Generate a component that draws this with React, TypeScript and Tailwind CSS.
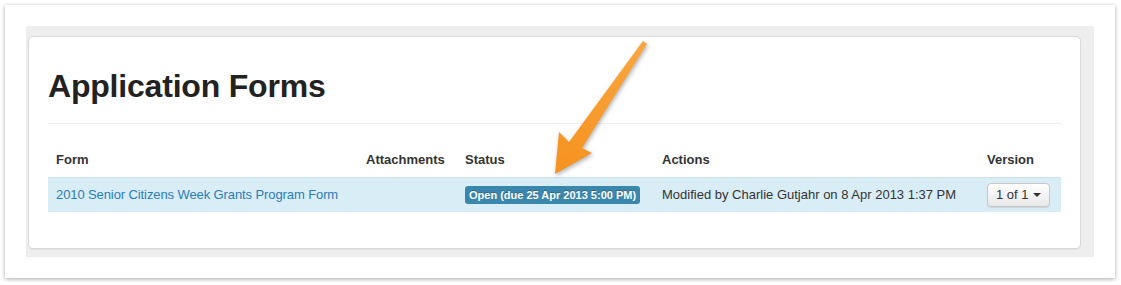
import React from 'react';

const font = { fontFamily: '"Liberation Sans", Arial, sans-serif' };

const columns = 'grid grid-cols-[310px_99px_197px_325px_82px]';

function Arrow() {
  return (
    <svg
      className="absolute left-0 top-0 pointer-events-none drop-shadow-[1px_2px_2px_rgba(0,0,0,0.3)]"
      width="1121"
      height="285"
      viewBox="0 0 1121 285"
    >
      <defs>
        <linearGradient id="arrowFill" x1="645" y1="42" x2="556" y2="174" gradientUnits="userSpaceOnUse">
          <stop offset="0" stopColor="#f8a640" />
          <stop offset="1" stopColor="#f6921e" />
        </linearGradient>
      </defs>
      <polygon
        points="643,41 647,44 582,148 592,153 555,174 559,132 569,142"
        fill="url(#arrowFill)"
      />
    </svg>
  );
}

export default function App() {
  return (
    <div className="relative w-[1121px] h-[285px] bg-white overflow-hidden" style={font}>
      <div className="ml-[5px] mt-[5px] w-[1110px] h-[273px] p-[21px] bg-white shadow-[0_1px_4px_rgba(0,0,0,0.35)]">
        <div className="h-full bg-[#eeeeee] pt-[10px] pl-[2px] pr-[13px] pb-[8px]">
          <div className="h-full bg-white border border-[#d9d9d9] rounded-[5px] px-[19px] pt-[29px] shadow-[0_1px_1px_rgba(0,0,0,0.05)]">
            <h1 className="text-[32px] leading-[40px] font-bold text-[#222222] tracking-[-0.2px]">
              Application Forms
            </h1>
            <div className="mt-[17px] h-px bg-[#eeeeee]" />

            <div className="mt-[18px] text-[13px] text-[#333333]">
              <div className={`${columns} h-[35px] items-center font-bold`}>
                <div className="px-2">Form</div>
                <div className="px-2">Attachments</div>
                <div className="px-2">Status</div>
                <div className="px-2">Actions</div>
                <div className="px-2">Version</div>
              </div>
              <div className={`${columns} h-[35px] items-center bg-[#d9edf7] border-t border-[#cfe0ec]`}>
                <div className="px-2">
                  <a href="#" className="text-[#2a7db8] tracking-[-0.1px]">
                    2010 Senior Citizens Week Grants Program Form
                  </a>
                </div>
                <div className="px-2" />
                <div className="px-2">
                  <span className="inline-block rounded-[3px] bg-[#3a87ad] px-[4px] text-[11px] leading-[18px] font-bold text-white [text-shadow:0_-1px_0_rgba(0,0,0,0.25)]">
                    Open (due 25 Apr 2013 5:00 PM)
                  </span>
                </div>
                <div className="px-2 whitespace-nowrap">
                  Modified by Charlie Gutjahr on 8 Apr 2013 1:37 PM
                </div>
                <div className="px-2">
                  <button className="flex items-center gap-[4px] h-[24px] px-[8px] rounded-[4px] border border-[#c8c8c8] bg-gradient-to-b from-white to-[#e8e8e8] text-[13px] text-[#333333] shadow-[0_1px_1px_rgba(0,0,0,0.1)]">
                    1 of 1
                    <span className="w-0 h-0 border-x-[4px] border-x-transparent border-t-[4px] border-t-[#333333]" />
                  </button>
                </div>
              </div>
            </div>
          </div>
        </div>
      </div>
      <Arrow />
    </div>
  );
}
